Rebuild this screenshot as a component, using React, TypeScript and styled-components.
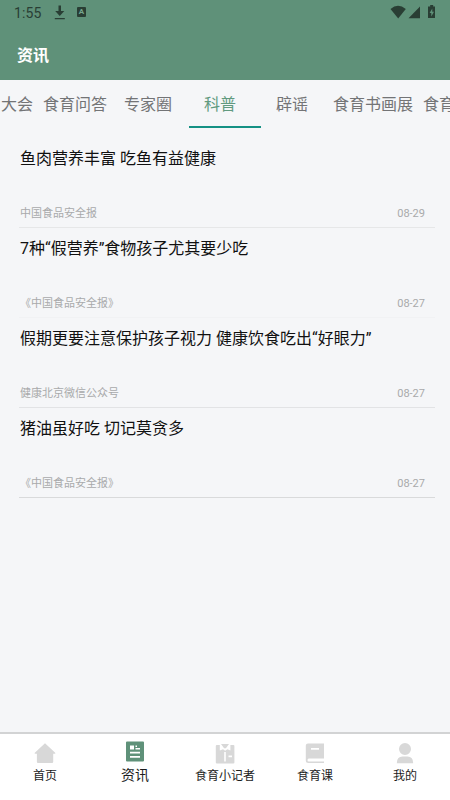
import React from "react";
import styled, { createGlobalStyle } from "styled-components";

const GlobalStyle = createGlobalStyle`
  * { box-sizing: border-box; }
  body {
    margin: 0;
    font-family: Roboto, "Noto Sans CJK SC", sans-serif;
    background: #f4f5f7;
  }
`;

const Screen = styled.div`
  width: 450px;
  height: 800px;
  display: flex;
  flex-direction: column;
  overflow: hidden;
  background: #f5f6f8;
`;

const Header = styled.header`
  height: 80px;
  flex: none;
  background: #5f9179;
`;

const StatusBar = styled.div`
  height: 26px;
  padding: 0 12px 0 14px;
  display: flex;
  align-items: center;
  justify-content: space-between;
  color: #293e34;
`;

const StatusGroup = styled.div`
  display: flex;
  align-items: center;
`;

const Clock = styled.span`
  width: 40px;
  font-size: 14px;
  line-height: 26px;
  letter-spacing: 0.1px;
`;

const PageTitle = styled.h1`
  margin: 0;
  padding: 0 17px;
  height: 54px;
  line-height: 60px;
  font-size: 16px;
  font-weight: 700;
  color: #fff;
`;

const TabBar = styled.nav`
  height: 48px;
  flex: none;
  display: flex;
  justify-content: flex-start;
  overflow: hidden;
`;

const Tab = styled.div<{ $width: number; $active?: boolean; $edge?: "start" | "end" }>`
  flex: 0 0 ${(p) => p.$width}px;
  height: 48px;
  position: relative;
  padding: 0 ${(p) => (p.$edge === "start" ? "5px 0 0" : "5px")};
  text-align: ${(p) => (p.$edge === "start" ? "right" : p.$edge === "end" ? "left" : "center")};
  font-size: 16px;
  line-height: 50px;
  white-space: nowrap;
  color: ${(p) => (p.$active ? "#619a7f" : "#737476")};
`;

const Indicator = styled.i`
  position: absolute;
  left: 5px;
  bottom: 0;
  width: 72px;
  height: 2px;
  background: #159184;
`;

const Feed = styled.main`
  flex: 1;
  padding: 10px 15px 0 19px;
`;

const Article = styled.article<{ $line: string }>`
  height: 90px;
  padding: 9px 10px 0 1px;
  display: flex;
  flex-direction: column;
  justify-content: space-between;
  border-bottom: 1px solid ${(p) => p.$line};
`;

const Headline = styled.h2`
  margin: 0;
  font-size: 16px;
  line-height: 24px;
  font-weight: 400;
  color: #111;
  white-space: nowrap;
`;

const Meta = styled.div`
  height: 28px;
  display: flex;
  justify-content: space-between;
  font-size: 11px;
  line-height: 30px;
  color: #a9aaab;
`;

const BottomNav = styled.nav`
  height: 68px;
  flex: none;
  display: flex;
  background: #fff;
  border-top: 2px solid #d2d3d4;
`;

const NavItem = styled.div<{ $active?: boolean }>`
  flex: 1;
  display: flex;
  flex-direction: column;
  align-items: center;
  padding-top: ${(p) => (p.$active ? 7 : 9)}px;
  color: ${(p) => (p.$active ? "#5f9179" : "#d8d8d8")};

  svg { display: block; flex: none; }
`;

const NavLabel = styled.span<{ $active?: boolean }>`
  font-size: ${(p) => (p.$active ? 14 : 12)}px;
  line-height: 22px;
  margin-top: ${(p) => (p.$active ? 1 : 0)}px;
  color: #1c1c1c;
`;

const DownloadIcon = () => (
  <svg width="12" height="16" viewBox="0 0 12 16" fill="currentColor">
    <path d="M4.500 0.500h2.500v5.500H10.300l-4.550 5L1.200 6h3.300zM.8 13h10v1.200H.8z" />
  </svg>
);

const LetterBadge = styled.span`
  width: 9px;
  height: 10px;
  margin: 0 0 2px 11px;
  border-radius: 1px;
  background: currentColor;
  display: flex;
  align-items: center;
  justify-content: center;
`;

const BadgeLetter = styled.b`
  font-size: 8px;
  line-height: 10px;
  color: #75a68e;
`;

const SignalIcons = () => (
  <svg width="48" height="16" viewBox="0 0 48 16" fill="currentColor">
    <path d="M.5 4Q8-2.500 15.800 4L8.200 13.500z" />
    <path d="M18.500 13.200h11.500V1.500z" />
    <path
      fillRule="evenodd"
      d="M40.200 0h3v1.500h1.800V13h-7V1.500h2.200zM42.300 3.500L39.600 8h1.700v3.500l2.700-4.800h-1.700z"
    />
  </svg>
);

const icons = {
  home: (
    <path d="M11 0.200L21.200 9.800q.7.900-.5.900h-1.500v8.300q0 1.100-1.100 1.100H4q-1.100 0-1.100-1.100v-8.300H1.300q-1.200 0-.5-.9z" />
  ),
  news: (
    <path
      fillRule="evenodd"
      d="M3 .5h16q1 0 1 1v18q0 1-1 1H3q-1 0-1-1V1.500q0-1 1-1zM6 4.500v4h4V4.500zM11.500 4.500V6H13V4.500zM11.500 7V8.500H16V7zM6 10.700v1.800h10v-1.800zM6 15v1.800h10V15z"
    />
  ),
  reporter: (
    <path
      fillRule="evenodd"
      d="M2.800 2h3v5.500l3.200-1.300 2.200 1.600 2.200-1.600 3 1.300V2h3q1 0 1 1v16.500q0 1-1 1H2.800q-1 0-1-1V3q0-1 1-1zM10.200 9v9.500h1.600V9zM14.500 12.500v1.800h3.500v-1.800zM7 1h8l-3.100 4.200H10.100z"
    />
  ),
  book: (
    <path
      fillRule="evenodd"
      d="M4 .5h16v15H4.800q-1.300 0-1.300 1.500t1.300 1.500H20V20H4.500Q1.800 20 1.800 17.500V2.500q0-2 2.200-2zM7 5V6.800h8V5z"
    />
  ),
  user: (
    <path d="M11 0a6 6 0 1 1 0 12a6 6 0 1 1 0-12zM8.500 13.500h5q5.700 0 5.700 6.800H2.800q0-6.800 5.700-6.800z" />
  ),
};

const tabs = [
  { label: "食育问答", width: 74 },
  { label: "专家圈", width: 72 },
  { label: "科普", width: 72, active: true },
  { label: "辟谣", width: 72 },
  { label: "食育书画展", width: 90 },
];

const articles = [
  { title: "鱼肉营养丰富 吃鱼有益健康", source: "中国食品安全报", date: "08-29", line: "#e6e7e8" },
  { title: "7种“假营养”食物孩子尤其要少吃", source: "《中国食品安全报》", date: "08-27", line: "#f1f2f4" },
  { title: "假期更要注意保护孩子视力 健康饮食吃出“好眼力”", source: "健康北京微信公众号", date: "08-27", line: "#e2e3e5" },
  { title: "猪油虽好吃 切记莫贪多", source: "《中国食品安全报》", date: "08-27", line: "#d9dadb" },
];

const navItems: { label: string; icon: keyof typeof icons; active?: boolean }[] = [
  { label: "首页", icon: "home" },
  { label: "资讯", icon: "news", active: true },
  { label: "食育小记者", icon: "reporter" },
  { label: "食育课", icon: "book" },
  { label: "我的", icon: "user" },
];

export default function App() {
  return (
    <Screen>
      <GlobalStyle />
      <Header>
        <StatusBar>
          <StatusGroup>
            <Clock>1:55</Clock>
            <DownloadIcon />
            <LetterBadge><BadgeLetter>A</BadgeLetter></LetterBadge>
          </StatusGroup>
          <SignalIcons />
        </StatusBar>
        <PageTitle>资讯</PageTitle>
      </Header>
      <TabBar>
        <Tab $width={38} $edge="start">大会</Tab>
        {tabs.map((tab) => (
          <Tab key={tab.label} $width={tab.width} $active={tab.active}>
            {tab.label}
            {tab.active && <Indicator />}
          </Tab>
        ))}
        <Tab $width={74} $edge="end">食育</Tab>
      </TabBar>
      <Feed>
        {articles.map((a) => (
          <Article key={a.title} $line={a.line}>
            <Headline>{a.title}</Headline>
            <Meta>
              <span>{a.source}</span>
              <span>{a.date}</span>
            </Meta>
          </Article>
        ))}
      </Feed>
      <BottomNav>
        {navItems.map((item) => (
          <NavItem key={item.label} $active={item.active}>
            <svg width="22" height="22" viewBox="0 0 22 22" fill="currentColor">
              {icons[item.icon]}
            </svg>
            <NavLabel $active={item.active}>{item.label}</NavLabel>
          </NavItem>
        ))}
      </BottomNav>
    </Screen>
  );
}
